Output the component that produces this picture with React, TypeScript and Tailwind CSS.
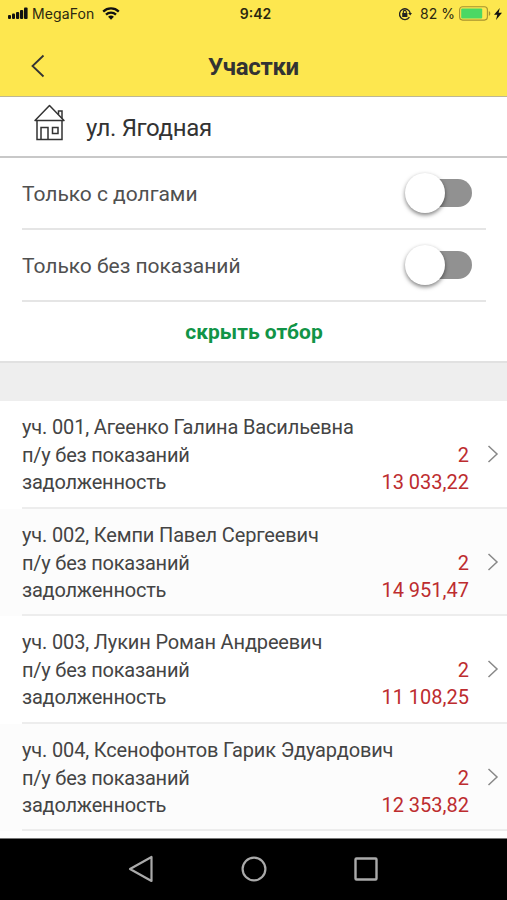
const plots = [
  { owner: "уч. 001, Агеенко Галина Васильевна", missing: "2", debt: "13 033,22", look: "h-[108px] bg-white" },
  { owner: "уч. 002, Кемпи Павел Сергеевич", missing: "2", debt: "14 951,47", look: "h-[107px] bg-[#fcfcfc]" },
  { owner: "уч. 003, Лукин Роман Андреевич", missing: "2", debt: "11 108,25", look: "h-[108px] bg-white" },
  { owner: "уч. 004, Ксенофонтов Гарик Эдуардович", missing: "2", debt: "12 353,82", look: "h-[107px] bg-[#fcfcfc]" },
];

function StatusBar() {
  return (
    <div className="flex h-7 items-center pb-px pl-2 pr-1 font-['Inter',sans-serif] text-[14px] leading-[27px] text-[#2b280f]">
      <div className="flex flex-1 items-center">
        <svg width="20" height="13" viewBox="0 0 20 13" fill="#111" className="shrink-0">
          <rect x="0" y="8" width="3" height="4" rx="1" />
          <rect x="4" y="6.5" width="3" height="5.5" rx="1" />
          <rect x="8" y="5" width="3.2" height="7" rx="1" />
          <rect x="12" y="3" width="3.2" height="9" rx="1" />
          <rect x="16" y="0.5" width="3.6" height="11.5" rx="1" />
        </svg>
        <span className="ml-1 tracking-[0.1px]">MegaFon</span>
        <svg width="18" height="13" viewBox="0 0 18 13" fill="none" stroke="#111" strokeWidth="2.3" className="ml-2">
          <path d="M1.2 4.6C5.6 .4 12.4 .4 16.8 4.6" />
          <path d="M4 7.7C6.8 5 11.2 5 14 7.7" />
          <path d="M6.1 9.8C7.8 8.2 10.2 8.2 11.9 9.8L9 12.7Z" fill="#111" stroke="none" />
        </svg>
      </div>
      <span className="font-semibold">9:42</span>
      <div className="flex flex-1 items-center justify-end">
        <svg width="14" height="14" viewBox="0 0 14 14" fill="none" stroke="#222" strokeWidth="1.3">
          <path d="M11.4 10.2A5.4 5.4 0 1 1 12.2 6" />
          <path d="M10.2 6H14L12.2 8.6Z" fill="#222" stroke="none" />
          <rect x="4.2" y="6" width="5.2" height="4" fill="#222" stroke="none" />
          <path d="M5.3 6.2V4.9a1.5 1.5 0 0 1 3 0V6.2" strokeWidth="1.1" />
        </svg>
        <span className="ml-2">82 %</span>
        <svg width="32" height="15" viewBox="0 0 32 15" className="ml-1">
          <rect x="0.6" y="0.7" width="27.8" height="13.4" rx="3" fill="none" stroke="#a7932f" strokeWidth="1.1" />
          <rect x="2.2" y="2.4" width="21" height="10" rx="1" fill="#4bd864" />
          <path d="M29.8 5v5c2-.8 2-4.2 0-5Z" fill="#a7932f" />
        </svg>
        <svg width="8" height="12" viewBox="0 0 8 12" className="ml-[3px] mr-px">
          <path d="M5.8 0 0 6.8H3.3L2 12 8 4.8H4.6Z" fill="#111" />
        </svg>
      </div>
    </div>
  );
}

function Toggle({ label }: { label: string }) {
  return (
    <div className="flex h-[72px] items-center justify-between border-b-2 border-[#e5e5e5] pr-[14px]">
      <span className="pt-0.5 text-[21px] leading-7 tracking-[-0.03px] text-[#505050]">{label}</span>
      <div className="flex h-7 w-[67px] items-center rounded-full bg-linear-to-r from-transparent from-50% to-[#919191] to-50%">
        <div className="size-10 shrink-0 rounded-full bg-white shadow-[0_2px_4px_rgba(0,0,0,0.5)]" />
      </div>
    </div>
  );
}

function House() {
  return (
    <svg width="31" height="37" viewBox="0 0 31 37" fill="none" stroke="#333" strokeWidth="1.5" className="mb-2">
      <path d="M1 16.5 15.5 1.5 30 16.5Z" strokeLinejoin="round" />
      <path d="M3 16.5V35.5H28V16.5" />
      <path d="M7 35.5V23.5H14V35.5M18.5 23.5H24V29.5H18.5Z" />
      <path d="M24.5 10.5V7H28V14.5" />
    </svg>
  );
}

function Plot({ plot }: { plot: (typeof plots)[number] }) {
  return (
    <div className={`${plot.look} relative pl-[22px]`}>
      <div className="h-full border-b-2 border-[#ededed] pr-[38px] pt-[13px] text-[20px] leading-[27.5px] text-[#444]">
        <div className="whitespace-nowrap tracking-[-0.15px]">{plot.owner}</div>
        <div className="flex justify-between">
          <span className="tracking-[-0.22px]">п/у без показаний</span>
          <span className="text-[#bd2c2f]">{plot.missing}</span>
        </div>
        <div className="flex justify-between">
          <span className="tracking-[-0.22px]">задолженность</span>
          <span className="text-[#bd2c2f]">{plot.debt}</span>
        </div>
      </div>
      <svg width="12" height="18" viewBox="0 0 12 18" fill="none" stroke="#888" strokeWidth="1.5" className="absolute right-2 top-[44px]">
        <path d="M1.5 1 10 9 1.5 17" />
      </svg>
    </div>
  );
}

export default function App() {
  return (
    <div className="flex h-[900px] w-[507px] flex-col overflow-hidden bg-white font-['Roboto',sans-serif]">
      <header className="h-[97px] shrink-0 border-b border-[#bdb795] bg-[#fde74f]">
        <StatusBar />
        <div className="flex h-[68px] items-center pb-px pl-[31px] pt-2">
          <svg width="14" height="24" viewBox="0 0 14 24" fill="none" stroke="#333" strokeWidth="1.8">
            <path d="M12.5 1.5 1.5 12 12.5 22.5" />
          </svg>
          <h1 className="flex-1 pr-[45px] pt-0.5 text-center text-[24px] font-bold leading-8 tracking-[-0.3px] text-[#333]">Участки</h1>
        </div>
      </header>
      <div className="flex h-[61px] shrink-0 items-center border-b-2 border-[#c8c8c8] pl-[34px]">
        <House />
        <span className="ml-[21px] pt-0.5 text-[24px] leading-8 tracking-[-0.35px] text-[#333]">ул. Ягодная</span>
      </div>
      <div className="shrink-0 pl-[22px] pr-[21px]">
        <Toggle label="Только с долгами" />
        <Toggle label="Только без показаний" />
      </div>
      <div className="flex h-[61px] shrink-0 items-center justify-center border-b-2 border-[#e1e1e1] pl-px pt-0.5 text-[21px] font-bold text-[#119447]">
        скрыть отбор
      </div>
      <div className="h-[38px] shrink-0 bg-[#eeeeee]" />
      <main className="h-[437px] shrink-0">
        {plots.map((plot) => (
          <Plot key={plot.owner} plot={plot} />
        ))}
      </main>
      <nav className="flex min-h-0 flex-1 items-center justify-center gap-[87px] border-t border-[#777] bg-black pb-px pr-px">
        <svg width="26" height="28" viewBox="0 0 26 28" fill="none" stroke="#aaa" strokeWidth="2.2" strokeLinejoin="round">
          <path d="M23.5 2V26L2 14Z" />
        </svg>
        <svg width="26" height="26" viewBox="0 0 26 26" fill="none" stroke="#aaa" strokeWidth="2.2">
          <circle cx="13" cy="13" r="11.4" />
        </svg>
        <svg width="24" height="24" viewBox="0 0 24 24" fill="none" stroke="#aaa" strokeWidth="2.4">
          <rect x="1.5" y="1.5" width="21" height="21" rx="1" />
        </svg>
      </nav>
    </div>
  );
}
